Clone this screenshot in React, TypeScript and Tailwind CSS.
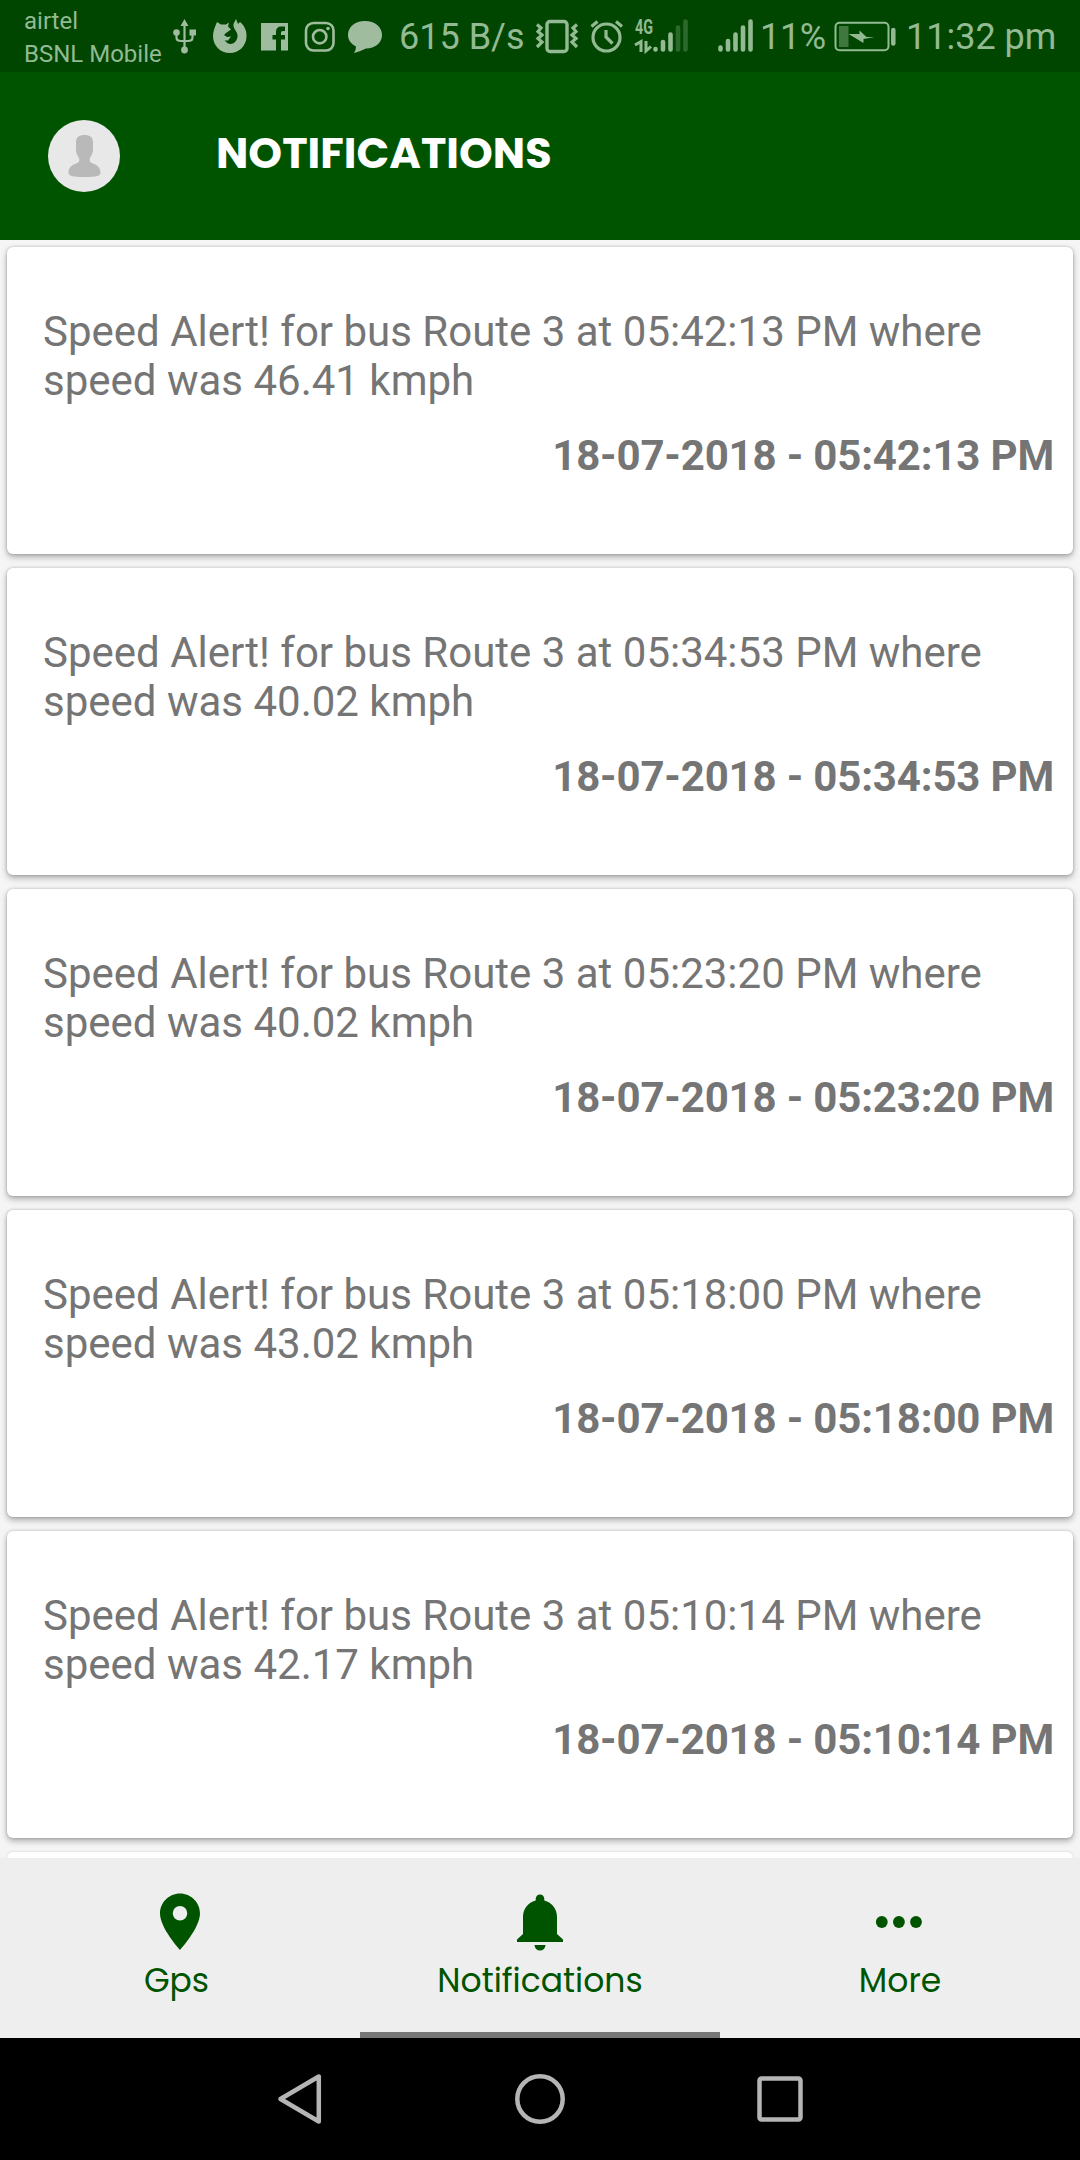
import type { ReactNode } from "react";

const alerts = [
  { time: "05:42:13 PM", speed: "46.41" },
  { time: "05:34:53 PM", speed: "40.02" },
  { time: "05:23:20 PM", speed: "40.02" },
  { time: "05:18:00 PM", speed: "43.02" },
  { time: "05:10:14 PM", speed: "42.17" },
];

function StatusBar() {
  return (
    <div className="flex h-[72px] shrink-0 bg-[#004600] text-[#93ba93]">
      <div className="ml-[24px] w-[145px] pt-[5px] text-[24px] leading-[33px] whitespace-nowrap">
        <div>airtel</div>
        <div>BSNL Mobile</div>
      </div>
      <svg className="h-[72px] w-[218px] text-[#9fbc9f]" viewBox="169 0 218 72" fill="currentColor">
        <g stroke="currentColor" strokeWidth="2.2" fill="none">
          <path d="M184.500 22V50M176.500 33V37.500Q176.500 41 181 41H188Q192.500 41 192.500 37.500V33" />
        </g>
        <path d="M184.500 19L188.500 26H180.500Z" />
        <circle cx="184.500" cy="50" r="3.400" />
        <circle cx="176.500" cy="32.500" r="3.300" />
        <rect x="189.500" y="29.500" width="6.500" height="6" />
        <path d="M217 22L221 24.500H226L229 22.500L228 26.500L231 29.500L226 33L224 35L227 37L231 36.500L228 40.500L224.500 40.500L228 43.500C233 45.500 238 41 237.500 35C237 31 233 29 233.500 24L236 19L238 24L240 22C245 26 247 32 246.500 37C246 46 239 53 230 53C220 53 213 45.500 213 36C213 31 215 27 217 22Z" />
        <path fillRule="evenodd" d="M261 23H288V50.500H281V39.500H285V35H281V32.500Q281 31 283 31H285V26.500H281Q276 26.500 276 32V35H272.500V39.500H276V50.500H261Z" />
        <g fill="none" stroke="currentColor" strokeWidth="2.600">
          <rect x="306" y="23" width="27.500" height="27.500" rx="7.500" />
          <circle cx="319.700" cy="36.700" r="6.700" />
        </g>
        <circle cx="328" cy="28.500" r="1.800" />
        <path d="M365 21C375 21 382 27 382 35C382 43 375 48.500 366 48.500C362 50 359 52 354 53Q356 50 356 46.500C350 43.500 348 39 348 35C348 27 355 21 365 21Z" />
      </svg>
      <div className="w-[137px] pl-[12px] pt-[16px] text-[36px] leading-[43px] whitespace-nowrap">615 B/s</div>
      <svg className="h-[72px] w-[236px]" viewBox="524 0 236 72" fill="none" stroke="currentColor">
        <rect x="547" y="21.500" width="20" height="30" rx="3" strokeWidth="3.400" />
        <path strokeWidth="3.200" d="M537 24.500L541 28L538 31.500L542 35L538 38.500L542 42L537 47M577 24.500L573 28L576 31.500L572 35L576 38.500L572 42L577 47" />
        <circle cx="606.500" cy="37.500" r="13.500" strokeWidth="3.200" />
        <path strokeWidth="3.200" d="M606 30V37L612.500 43.500M591.500 26.500L597.500 21.500M622 26.500L616 21.500" />
        <text x="635" y="33.500" className="text-[20px] font-bold" textLength="18" lengthAdjust="spacingAndGlyphs" fill="currentColor" stroke="none">4G</text>
        <path strokeWidth="3" d="M635 45L641 41.500V52M646 41V51L651 46.500" />
        <g strokeWidth="4.600" strokeLinecap="round">
          <path d="M655.500 49V49.500M663 42V49.500M670.500 34.500V49.500" />
          <path stroke="#2c682c" d="M678 27.500V49.500M685.500 21.500V49.500" />
          <path d="M720.500 47.500V49.500M728 41V49.500M735.500 34.500V49.500M743 27.500V49.500M750.500 21.500V49.500" />
        </g>
      </svg>
      <div className="w-[72px] pt-[16px] text-[36px] leading-[43px] whitespace-nowrap tracking-[-0.3px]">11%</div>
      <svg className="h-[72px] w-[72px]" viewBox="832 0 72 72" fill="none" stroke="currentColor">
        <rect x="835.500" y="22.800" width="53" height="27.500" rx="4" strokeWidth="2" />
        <rect x="839" y="26" width="9.500" height="21" fill="#3f773f" stroke="none" />
        <path d="M848.500 34H859.500V30.500L866.500 37H874.500L863.500 39V43Z" fill="currentColor" stroke="none" />
        <path d="M893.300 30V43.500" strokeWidth="4.500" strokeLinecap="round" />
      </svg>
      <div className="pl-[2px] pt-[16px] text-[36px] leading-[43px] whitespace-nowrap">11:32 pm</div>
    </div>
  );
}

function Header() {
  return (
    <header className="flex h-[168px] shrink-0 bg-[#005400]">
      <svg className="mt-[48px] ml-[48px] size-[72px]" viewBox="0 0 72 72">
        <circle cx="36" cy="36" r="36" fill="#e8e8e8" />
        <path
          fill="#b9b9b9"
          d="M36.500 15C42 15 45 17.500 45 22V29C45 34 43 36 42 38C41 41 42 42.500 45 43.500C50 45.500 52.500 48 52.500 52.500C52.500 56 49 57 36.500 57C24 57 20.500 56 20.500 52.500C20.500 48 23 45.500 28 43.500C31 42.500 32 41 31 38C29.500 35 28 34 28 29V22C28 17.500 31 15 36.500 15Z"
        />
      </svg>
      <h1 className="mt-[56px] ml-[96px] font-['Poppins','Inter',sans-serif] text-[43px] leading-[50px] font-bold text-white">
        NOTIFICATIONS
      </h1>
    </header>
  );
}

function AlertCard({ time, speed }: { time: string; speed: string }) {
  return (
    <article className="h-[307px] shrink-0 rounded-[6px] bg-white pt-[60px] pr-[19px] pl-[36px] text-[42px] leading-[49px] text-[#757575] shadow-[0_3px_6px_rgba(0,0,0,0.3),0_0_3px_rgba(0,0,0,0.2)]">
      <p>
        Speed Alert! for bus Route 3 at {time} where
        <br />
        speed was {speed} kmph
      </p>
      <p className="mt-[26px] text-right font-bold tracking-[-0.17px]">18-07-2018 - {time}</p>
    </article>
  );
}

function Tab({ label, active, children }: { label: ReactNode; active?: boolean; children: ReactNode }) {
  return (
    <div className="flex flex-1 flex-col items-center pt-[30px]">
      <svg className="h-[68px] w-[68px]" viewBox="0 0 68 68" fill="currentColor">
        {children}
      </svg>
      <span className="mt-[5px] h-[71px] text-[33px] leading-[40px]">{label}</span>
      {active && <div className="h-[6px] w-full bg-[#777]" />}
    </div>
  );
}

function TabBar() {
  return (
    <nav className="flex h-[180px] shrink-0 bg-[#eee] font-['Poppins','Inter',sans-serif] text-[#005400]">
      <Tab label={<span className="pr-[7px]">Gps</span>}>
        <path fillRule="evenodd" d="M34 5.500C23 5.500 14 14.500 14 25.500C14 40 34 62 34 62S54 40 54 25.500C54 14.500 45 5.500 34 5.500ZM34 18A7.200 7.200 0 1 1 34 32.500A7.200 7.200 0 1 1 34 18Z" />
      </Tab>
      <Tab label="Notifications" active>
        <path d="M34 6.500C36.500 6.500 38.300 8.500 38.300 11V12.500C46 14.500 51 21 51 29V46L57 51.500V54H11V51.500L17 46V29C17 21 22 14.500 29.700 12.500V11C29.700 8.500 31.500 6.500 34 6.500ZM28.500 57H39.500A5.500 5.500 0 0 1 28.500 57Z" />
      </Tab>
      <Tab label="More">
        <circle cx="15.800" cy="34" r="5.900" />
        <circle cx="32.900" cy="34" r="5.900" />
        <circle cx="50" cy="34" r="5.900" />
      </Tab>
    </nav>
  );
}

function SystemNav() {
  return (
    <div className="flex h-[122px] shrink-0 items-center justify-center gap-[180px] bg-black">
      <svg className="size-[60px]" viewBox="0 0 60 60" fill="none" stroke="#b5b5b5" strokeWidth="4.500" strokeLinejoin="round">
        <path d="M10.500 30L48.800 7.500V52.500Z" />
      </svg>
      <svg className="size-[60px]" viewBox="0 0 60 60" fill="none" stroke="#b5b5b5" strokeWidth="4.500">
        <circle cx="30" cy="30" r="22.700" />
      </svg>
      <svg className="size-[60px]" viewBox="0 0 60 60" fill="none" stroke="#b5b5b5" strokeWidth="4.500">
        <rect x="9.500" y="9.500" width="41" height="41" rx="2" />
      </svg>
    </div>
  );
}

export default function App() {
  return (
    <div className="flex h-[2160px] w-[1080px] flex-col overflow-hidden font-['Roboto',sans-serif]">
      <StatusBar />
      <Header />
      <main className="flex h-[1618px] shrink-0 flex-col gap-[14px] overflow-hidden bg-[#f5f5f5] px-[7px] pt-[7px]">
        {alerts.map((alert) => (
          <AlertCard key={alert.time} {...alert} />
        ))}
        <div className="h-[307px] shrink-0 rounded-[6px] bg-white shadow-[0_0_3px_rgba(0,0,0,0.15)]" />
      </main>
      <TabBar />
      <SystemNav />
    </div>
  );
}
